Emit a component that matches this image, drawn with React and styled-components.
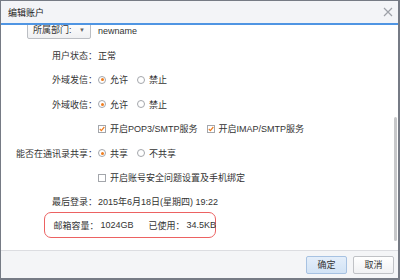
import React from "react";
import styled, { createGlobalStyle } from "styled-components";

const Global = createGlobalStyle`
  html, body {
    margin: 0;
    padding: 0;
    background: #ffffff;
  }
  body {
    font-family: "Liberation Sans Narrow", "Liberation Sans", "Noto Sans CJK SC", sans-serif;
    font-size: 9px;
    color: #333;
  }
`;

const Window = styled.div`
  width: 400px;
  height: 280px;
  box-sizing: border-box;
  border: 1px solid #767b85;
  border-right-width: 2px;
  border-bottom-width: 2px;
  display: flex;
  flex-direction: column;
  background: #fff;
  overflow: hidden;
`;

const TitleBar = styled.div`
  height: 22px;
  flex: none;
  background: #f3f4f7;
  border-bottom: 2px solid #4f95e3;
  display: flex;
  align-items: center;
  justify-content: space-between;
  padding: 0 5px 0 7px;
`;

const Title = styled.span`
  font-size: 9px;
  color: #222;
`;

const Body = styled.div`
  flex: 1;
  position: relative;
  overflow: hidden;
`;

const Form = styled.div`
  display: grid;
  grid-template-columns: 96px 1fr;
  grid-auto-rows: 24.4px;
  column-gap: 1px;
  margin-top: -6px;
  align-items: center;
`;

const Label = styled.span`
  justify-self: end;
  white-space: nowrap;
`;

const Value = styled.div`
  display: flex;
  align-items: center;
  gap: ${(p) => p.gap || 0}px;
  white-space: nowrap;
`;

const Select = styled.div`
  justify-self: end;
  margin-right: 6px;
  margin-top: -3px;
  box-sizing: border-box;
  width: 64px;
  height: 18px;
  border: 1px solid #bbbec3;
  border-radius: 2px;
  background: linear-gradient(#ffffff, #eff0f2);
  display: flex;
  align-items: center;
  justify-content: space-between;
  padding: 0 5px 0 5px;
  white-space: nowrap;
  overflow: hidden;
`;

const Caret = styled.span`
  font-size: 6px;
  color: #666;
  flex: none;
`;

const Option = styled.label`
  display: flex;
  align-items: center;
  gap: 4px;
`;

const Radio = styled.span`
  box-sizing: border-box;
  width: 8px;
  height: 8px;
  border-radius: 50%;
  border: 1px solid #a3a6ab;
  background: #fff;
  display: flex;
  align-items: center;
  justify-content: center;
  &::after {
    content: "";
    width: 3px;
    height: 3px;
    border-radius: 50%;
    background: ${(p) => (p.on ? "#f07d1f" : "transparent")};
  }
`;

const Check = styled.span`
  box-sizing: border-box;
  width: 8px;
  height: 8px;
  border: 1px solid #a3a6ab;
  background: #fff;
  display: flex;
  align-items: center;
  justify-content: center;
`;

const Highlight = styled.div`
  grid-column: 1 / span 2;
  margin: -2px 0 0 43px;
  width: 172px;
  height: 26px;
  box-sizing: border-box;
  border: 1.5px solid #ec6262;
  border-radius: 7px;
  display: flex;
  align-items: center;
  padding-left: 8.5px;
  align-self: start;
  white-space: nowrap;
`;

const Part = styled.span`
  margin-left: ${(p) => p.ml || 0}px;
`;

const Scroll = styled.div`
  position: absolute;
  right: 1px;
  top: 92px;
  width: 3px;
  height: 124px;
  border-radius: 2px;
  background: #c7c8ca;
`;

const Footer = styled.div`
  height: 27px;
  flex: none;
  border-top: 1px solid #dcdde1;
  background: #f4f5f7;
  display: flex;
  align-items: center;
  justify-content: flex-end;
  gap: 6px;
  padding-right: 4px;
`;

const Button = styled.button`
  box-sizing: border-box;
  width: 41px;
  height: 18px;
  font: inherit;
  font-size: 9px;
  color: #333;
  border-radius: 2px;
  border: 1px solid ${(p) => (p.primary ? "#a7c2e2" : "#c0c2c6")};
  background: ${(p) =>
    p.primary
      ? "linear-gradient(#e4eefa, #d2e3f5)"
      : "linear-gradient(#ffffff, #f0f1f3)"};
  padding: 0;
`;

const CheckMark = () => (
  <svg width="6" height="6" viewBox="0 0 6 6">
    <path d="M0.8 3 L2.4 4.6 L5.3 1" fill="none" stroke="#f07d1f" strokeWidth="1.2" />
  </svg>
);

const CloseIcon = () => (
  <svg width="10" height="10" viewBox="0 0 10 10">
    <path d="M1 1 L9 9 M9 1 L1 9" stroke="#9da1a8" strokeWidth="1.2" />
  </svg>
);

export default function App() {
  return (
    <>
      <Global />
      <Window>
        <TitleBar>
          <Title>编辑账户</Title>
          <CloseIcon />
        </TitleBar>
        <Body>
          <Form>
            <Select>
              <span>所属部门:</span>
              <Caret>▼</Caret>
            </Select>
            <Value>newname</Value>

            <Label>用户状态：</Label>
            <Value>正常</Value>

            <Label>外域发信：</Label>
            <Value gap={9}>
              <Option><Radio on />允许</Option>
              <Option><Radio />禁止</Option>
            </Value>

            <Label>外域收信：</Label>
            <Value gap={9}>
              <Option><Radio on />允许</Option>
              <Option><Radio />禁止</Option>
            </Value>

            <span />
            <Value gap={9}>
              <Option><Check><CheckMark /></Check>开启POP3/SMTP服务</Option>
              <Option><Check><CheckMark /></Check>开启IMAP/SMTP服务</Option>
            </Value>

            <Label>能否在通讯录共享：</Label>
            <Value gap={9}>
              <Option><Radio on />共享</Option>
              <Option><Radio />不共享</Option>
            </Value>

            <span />
            <Value>
              <Option><Check />开启账号安全问题设置及手机绑定</Option>
            </Value>

            <Label>最后登录：</Label>
            <Value>2015年6月18日(星期四) 19:22</Value>

            <Highlight>
              <Part>邮箱容量：</Part>
              <Part ml={2}>1024GB</Part>
              <Part ml={15}>已使用：</Part>
              <Part ml={2}>34.5KB</Part>
            </Highlight>
          </Form>
          <Scroll />
        </Body>
        <Footer>
          <Button primary>确定</Button>
          <Button>取消</Button>
        </Footer>
      </Window>
    </>
  );
}
